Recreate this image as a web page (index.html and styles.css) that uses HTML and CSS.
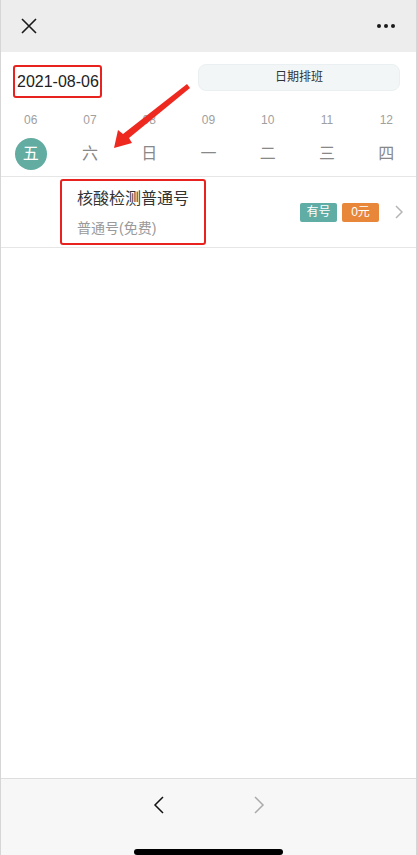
FILE: index.html
```html
<!DOCTYPE html>
<html lang="zh">
<head>
    <meta charset="UTF-8">
    <meta name="viewport" content="width=device-width, initial-scale=1.0">
    <title>日期排班</title>
    <link rel="stylesheet" href="styles.css">
</head>
<body>
    <div class="page">
        <header class="topbar">
            <svg class="icon-close" width="18" height="18" viewBox="0 0 18 18">
                <path d="M2 2 L16 16 M16 2 L2 16" stroke="#1a1a1a" stroke-width="1.6" fill="none"/>
            </svg>
            <svg class="icon-more" width="20" height="6" viewBox="0 0 20 6">
                <circle cx="3" cy="3" r="2" fill="#1a1a1a"/>
                <circle cx="10" cy="3" r="2" fill="#1a1a1a"/>
                <circle cx="17" cy="3" r="2" fill="#1a1a1a"/>
            </svg>
        </header>

        <div class="head">
            <span class="date-box">2021-08-06</span>
            <a class="btn-schedule" href="#">日期排班</a>
        </div>

        <div class="week">
            <div class="day"><span class="num">06</span><span class="wd active">五</span></div>
            <div class="day"><span class="num">07</span><span class="wd">六</span></div>
            <div class="day"><span class="num">08</span><span class="wd">日</span></div>
            <div class="day"><span class="num">09</span><span class="wd">一</span></div>
            <div class="day"><span class="num">10</span><span class="wd">二</span></div>
            <div class="day"><span class="num">11</span><span class="wd">三</span></div>
            <div class="day"><span class="num">12</span><span class="wd">四</span></div>
        </div>

        <div class="item">
            <div class="item-box">
                <div class="item-title">核酸检测普通号</div>
                <div class="item-sub">普通号(免费)</div>
            </div>
            <div class="item-tags">
                <span class="tag tag-green">有号</span>
                <span class="tag tag-orange">0元</span>
                <svg class="icon-chevron" width="8" height="14" viewBox="0 0 8 14">
                    <path d="M1 1 L7 7 L1 13" stroke="#b5b5b5" stroke-width="1.5" fill="none"/>
                </svg>
            </div>
        </div>

        <div class="spacer"></div>

        <footer class="bottombar">
            <div class="nav-btns">
                <svg width="11" height="18" viewBox="0 0 11 18">
                    <path d="M10 1 L2 9 L10 17" stroke="#111" stroke-width="1.5" fill="none"/>
                </svg>
                <svg width="11" height="18" viewBox="0 0 11 18">
                    <path d="M1 1 L9 9 L1 17" stroke="#aaa" stroke-width="1.5" fill="none"/>
                </svg>
            </div>
            <div class="home-bar"></div>
        </footer>

        <!-- annotation arrow -->
        <svg class="arrow" width="417" height="200" viewBox="0 0 417 200">
            <path d="M186 84 L189 88 L128 138 L131 143 L113 148 L117 130 L122 134 Z" fill="#ee2a20"/>
        </svg>
    </div>
</body>
</html>
```

FILE: styles.css
```css
body {
    margin: 0;
    padding: 0;
    font-family: 'Liberation Sans', 'Noto Sans CJK SC', sans-serif;
    background-color: #fff;
}
.page {
    position: relative;
    height: 855px;
    display: flex;
    flex-direction: column;
    border-left: 1px solid #d6d6d6;
    border-right: 1px solid #d6d6d6;
    box-sizing: border-box;
    overflow: hidden;
}
.topbar {
    height: 52px;
    flex-shrink: 0;
    background-color: #ededed;
    display: flex;
    justify-content: space-between;
    align-items: center;
    padding: 0 20px 0 19px;
}
.head {
    display: flex;
    justify-content: space-between;
    align-items: flex-start;
    padding: 13px 16px 0 12px;
}
.date-box {
    display: inline-block;
    border: 2px solid #e8231f;
    border-radius: 3px;
    padding: 5px 1px 4px 2px;
    font-size: 16px;
    color: #222;
    line-height: 20px;
}
.btn-schedule {
    width: 200px;
    height: 25px;
    line-height: 25px;
    margin-top: -1px;
    background-color: #f2f6f7;
    border: 1px solid #eaf0f1;
    border-radius: 8px;
    text-align: center;
    font-size: 12px;
    color: #333;
    text-decoration: none;
}
.week {
    display: grid;
    grid-template-columns: repeat(7, 1fr);
    padding-top: 15px;
    border-bottom: 1px solid #e6e6e6;
}
.day {
    display: flex;
    flex-direction: column;
    align-items: center;
}
.num {
    font-size: 12px;
    color: #a0a0a0;
    line-height: 14px;
}
.wd {
    width: 32px;
    height: 32px;
    line-height: 32px;
    margin: 11px 0 6px;
    text-align: center;
    font-size: 16px;
    color: #888;
    border-radius: 50%;
}
.wd.active {
    background-color: #62aca2;
    color: #fff;
}
.item {
    display: flex;
    justify-content: space-between;
    align-items: center;
    height: 70px;
    border-bottom: 1px solid #e6e6e6;
    padding: 0 13px 0 59px;
}
.item-box {
    border: 2px solid #e8231f;
    border-radius: 3px;
    padding: 7px 15px 5px;
    width: 112px;
}
.item-title {
    font-size: 16px;
    color: #333;
    line-height: 22px;
}
.item-sub {
    font-size: 14px;
    color: #9a9a9a;
    line-height: 20px;
    margin-top: 8px;
}
.item-tags {
    display: flex;
    align-items: center;
    gap: 5px;
}
.tag {
    display: inline-block;
    width: 37px;
    height: 19px;
    line-height: 19px;
    border-radius: 2px;
    text-align: center;
    font-size: 12px;
    color: #fff;
}
.tag-green {
    background-color: #5fada4;
}
.tag-orange {
    background-color: #e8873a;
}
.icon-chevron {
    margin-left: 11px;
}
.spacer {
    flex: 1;
}
.bottombar {
    height: 77px;
    flex-shrink: 0;
    background-color: #f7f7f7;
    border-top: 1px solid #dedede;
    box-sizing: border-box;
    display: flex;
    flex-direction: column;
    align-items: center;
}
.nav-btns {
    display: flex;
    gap: 90px;
    margin-top: 17px;
}
.home-bar {
    width: 149px;
    height: 8px;
    background-color: #000;
    border-radius: 4px;
    margin-top: 35px;
}
.arrow {
    position: absolute;
    left: 0;
    top: 0;
}
```
